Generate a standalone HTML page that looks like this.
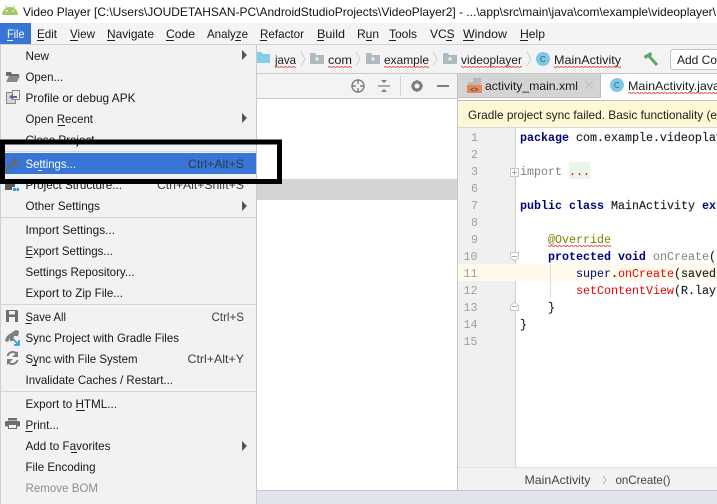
<!DOCTYPE html>
<html><head><meta charset="utf-8"><style>
html,body{margin:0;padding:0;background:#fff;overflow:hidden}
svg{display:block}
text{font-family:"Liberation Sans",sans-serif;font-size:12px;fill:#1c1c1c;white-space:pre}
.m{fill:#16161e}
.s{fill:#3c3c3c}
.c{font-family:"Liberation Mono",monospace;font-size:11.67px;fill:#222;stroke:#222;stroke-width:.15px}
.k{font-family:"Liberation Mono",monospace;font-size:11.67px;fill:#000080;font-weight:bold}
.n{font-family:"Liberation Mono",monospace;font-size:11.67px;fill:#a0a0a0}
.g{font-family:"Liberation Mono",monospace;font-size:11.67px;fill:#808080}
.r{font-family:"Liberation Mono",monospace;font-size:11.67px;fill:#f00000}
</style></head><body>
<svg width="717" height="504" viewBox="0 0 717 504" xmlns="http://www.w3.org/2000/svg">
<defs>
<pattern id="sq" width="4" height="2" patternUnits="userSpaceOnUse"><path d="M0 1.6 L1 .4 L2 .4 L3 1.6 L4 1.6" fill="none" stroke="#e84040" stroke-width=".8"/></pattern>
</defs>
<rect width="717" height="504" fill="#fff"/>

<!-- title bar -->
<path d="M2 15 C2 10 6 7 10 7 C14 7 18 10 18 15z" fill="#a3c76a"/>
<path d="M5.500 5.500 L7 8 M14.500 5.500 L13 8" stroke="#a3c76a" stroke-width="1"/>
<rect x="6" y="10" width="1.500" height="1.500" fill="#fff"/><rect x="12.500" y="10" width="1.500" height="1.500" fill="#fff"/>
<text x="23" y="16" textLength="693" lengthAdjust="spacingAndGlyphs" style="fill:#111">Video Player [C:\Users\JOUDETAHSAN-PC\AndroidStudioProjects\VideoPlayer2] - ...\app\src\main\java\com\example\videoplayer\</text>

<!-- menu bar -->
<rect x="0" y="23" width="717" height="21" fill="#f4f4f4"/>
<rect x="0" y="44" width="717" height="1" fill="#d0d0d0"/>
<rect x="0" y="23" width="31" height="21" fill="#3875d7"/>
<text x="7" y="38" textLength="17.500" lengthAdjust="spacingAndGlyphs" style="fill:#fff">File</text>
<rect x="7" y="40" width="6" height="1" fill="#fff"/>
<g>
<text class="m" x="37" y="38" textLength="20" lengthAdjust="spacingAndGlyphs">Edit</text><rect x="37" y="40" width="7" height="1" fill="#222"/>
<text class="m" x="70" y="38" textLength="25" lengthAdjust="spacingAndGlyphs">View</text><rect x="70" y="40" width="8" height="1" fill="#222"/>
<text class="m" x="107" y="38" textLength="47" lengthAdjust="spacingAndGlyphs">Navigate</text><rect x="107" y="40" width="8" height="1" fill="#222"/>
<text class="m" x="166" y="38" textLength="29" lengthAdjust="spacingAndGlyphs">Code</text><rect x="166" y="40" width="8" height="1" fill="#222"/>
<text class="m" x="207" y="38" textLength="41" lengthAdjust="spacingAndGlyphs">Analyze</text><rect x="235" y="40" width="6" height="1" fill="#222"/>
<text class="m" x="260" y="38" textLength="44" lengthAdjust="spacingAndGlyphs">Refactor</text><rect x="260" y="40" width="7" height="1" fill="#222"/>
<text class="m" x="317" y="38" textLength="28" lengthAdjust="spacingAndGlyphs">Build</text><rect x="317" y="40" width="7" height="1" fill="#222"/>
<text class="m" x="357" y="38">Run</text><rect x="366" y="40" width="6" height="1" fill="#222"/>
<text class="m" x="389" y="38" textLength="28" lengthAdjust="spacingAndGlyphs">Tools</text><rect x="389" y="40" width="7" height="1" fill="#222"/>
<text class="m" x="430" y="38">VCS</text><rect x="446" y="40" width="6" height="1" fill="#222"/>
<text class="m" x="463" y="38" textLength="44" lengthAdjust="spacingAndGlyphs">Window</text><rect x="463" y="40" width="11" height="1" fill="#222"/>
<text class="m" x="520" y="38" textLength="25" lengthAdjust="spacingAndGlyphs">Help</text><rect x="520" y="40" width="8" height="1" fill="#222"/>
</g>

<!-- nav bar -->
<rect x="257" y="45" width="460" height="28" fill="#f3f3f3"/>
<rect x="257" y="73" width="460" height="1" fill="#c9c9c9"/>
<path d="M257 52 h4 l2 2 h7 v9 h-13z" fill="#86cde9"/>
<text x="275" y="64" textLength="21" lengthAdjust="spacingAndGlyphs">java</text>
<rect x="275" y="66" width="21" height="2" fill="url(#sq)"/>
<path d="M301 52 L305 59 L301 66" fill="none" stroke="#d0d0d0"/>
<path d="M310 53 h5 l1 2 h8 v9 h-14z" fill="#aeb9c0"/><circle cx="317" cy="59" r="1.600" fill="#f3f3f3"/>
<text x="328" y="64" textLength="24" lengthAdjust="spacingAndGlyphs">com</text>
<rect x="328" y="66" width="24" height="2" fill="url(#sq)"/>
<path d="M356 52 L360 59 L356 66" fill="none" stroke="#d0d0d0"/>
<path d="M366 53 h5 l1 2 h8 v9 h-14z" fill="#aeb9c0"/><circle cx="373" cy="59" r="1.600" fill="#f3f3f3"/>
<text x="384" y="64" textLength="45" lengthAdjust="spacingAndGlyphs">example</text>
<rect x="384" y="66" width="45" height="2" fill="url(#sq)"/>
<path d="M433 52 L437 59 L433 66" fill="none" stroke="#d0d0d0"/>
<path d="M443 53 h5 l1 2 h8 v9 h-14z" fill="#aeb9c0"/><circle cx="450" cy="59" r="1.600" fill="#f3f3f3"/>
<text x="461" y="64" textLength="61" lengthAdjust="spacingAndGlyphs">videoplayer</text>
<rect x="461" y="66" width="61" height="2" fill="url(#sq)"/>
<path d="M527 52 L531 59 L527 66" fill="none" stroke="#d0d0d0"/>
<circle cx="543" cy="59" r="7" fill="#7fc8e6"/>
<text x="540" y="62" style="font-size:8px;fill:#3d5a68">C</text>
<text x="554" y="64" textLength="67" lengthAdjust="spacingAndGlyphs">MainActivity</text>
<rect x="554" y="66" width="67" height="2" fill="url(#sq)"/>
<path d="M644.500 57.500 L651.500 53.500" stroke="#5aa86b" stroke-width="3.500" fill="none"/>
<path d="M648 55 L657 65" stroke="#5aa86b" stroke-width="3" fill="none"/>
<rect x="670.500" y="49.500" width="60" height="20" rx="3" fill="#fff" stroke="#c4c4c4"/>
<text x="677" y="64" textLength="40" lengthAdjust="spacingAndGlyphs">Add Co</text>

<!-- project toolbar -->
<rect x="257" y="74" width="200" height="24" fill="#f3f3f3"/>
<rect x="257" y="98" width="200" height="1" fill="#c9c9c9"/>
<circle cx="358" cy="86" r="6" fill="none" stroke="#7d7d7d" stroke-width="1.400"/>
<path d="M358 80 v4 M358 88 v4 M352 86 h4 M360 86 h4" stroke="#7d7d7d" stroke-width="1.400"/>
<path d="M378 86 h12" stroke="#7d7d7d" stroke-width="1.200"/>
<path d="M381 80 h6 l-3 3z M381 92 h6 l-3 -3z" fill="#7d7d7d"/>
<rect x="400" y="76" width="1" height="20" fill="#d4d4d4"/>
<circle cx="417" cy="86" r="4" fill="none" stroke="#7d7d7d" stroke-width="3"/>
<path d="M417 80 v2 M417 90 v2 M411 86 h2 M421 86 h2 M413 82 l1 1 M420 89 l1 1 M421 82 l-1 1 M414 89 l-1 1" stroke="#7d7d7d" stroke-width="1.600"/>
<rect x="437" y="85" width="12" height="2" fill="#7d7d7d"/>

<!-- selection in project panel -->
<rect x="257" y="179" width="200" height="21" fill="#d4d4d4"/>

<!-- editor -->
<rect x="457" y="74" width="1" height="416" fill="#c4c4c4"/>
<rect x="458" y="74" width="143" height="24" fill="#d4d4d4"/>
<rect x="600" y="74" width="1" height="24" fill="#bdbdbd"/>
<rect x="458" y="97" width="143" height="1" fill="#bdbdbd"/>
<path d="M468 85 V82 H473 V78 H481 V85z" fill="#b9b9b9"/>
<rect x="467" y="85" width="15" height="8" fill="#e8855a"/>
<text x="470" y="92" style="font-size:7px;fill:#333">&lt;&gt;</text>
<text x="485" y="90" textLength="93" lengthAdjust="spacingAndGlyphs">activity_main.xml</text>
<path d="M585 81 L593 89 M593 81 L585 89" stroke="#bdbdbd" stroke-width="1.100"/>
<circle cx="617" cy="85" r="7" fill="#7fc8e6"/>
<text x="614" y="88" style="font-size:8px;fill:#3d5a68">C</text>
<text x="628" y="90" textLength="92" lengthAdjust="spacingAndGlyphs">MainActivity.java</text>
<rect x="628" y="92" width="89" height="2" fill="url(#sq)"/>
<rect x="458" y="100" width="259" height="1" fill="#bdbdbd"/>
<rect x="458" y="101" width="259" height="26" fill="#fff8d6"/>
<rect x="458" y="127" width="259" height="1" fill="#d8d8d8"/>
<text x="468" y="119" textLength="249" lengthAdjust="spacingAndGlyphs">Gradle project sync failed. Basic functionality (e</text>

<rect x="458" y="128" width="57" height="339" fill="#f0f0f0"/>
<rect x="515" y="128" width="1" height="339" fill="#d0d0d0"/>
<rect x="458" y="264" width="259" height="17" fill="#fffbec"/>

<text class="n" x="471" y="141">1</text>
<text class="n" x="471" y="158">2</text>
<text class="n" x="471" y="175">3</text>
<text class="n" x="471" y="192">6</text>
<text class="n" x="471" y="209">7</text>
<text class="n" x="471" y="226">8</text>
<text class="n" x="471" y="243">9</text>
<text class="n" x="463.500" y="260">10</text>
<text class="n" x="463.500" y="277">11</text>
<text class="n" x="463.500" y="294">12</text>
<text class="n" x="463.500" y="311">13</text>
<text class="n" x="463.500" y="328">14</text>
<text class="n" x="463.500" y="345">15</text>

<rect x="510.500" y="168.500" width="8" height="8" fill="#fff" stroke="#c6c6c6"/>
<path d="M512 172.500 h5 M514.500 170 v5" stroke="#aaa"/>
<path d="M510.500 252.500 h8 v5 l-4 3.500 l-4 -3.500z" fill="#fff" stroke="#c6c6c6"/>
<path d="M512 256.500 h5" stroke="#aaa"/>
<path d="M510.500 310.500 h8 v-5 l-4 -3.500 l-4 3.500z" fill="#fff" stroke="#c6c6c6"/>
<path d="M512 306.500 h5" stroke="#aaa"/>
<rect x="550" y="264" width="1" height="33" fill="#dcdcdc"/>

<text class="k" x="520" y="141">package</text>
<text class="c" x="569" y="141"> com.example.videoplay</text>
<text class="g" x="520" y="175">import</text>
<rect x="569" y="162" width="21" height="17" fill="#e9f5e9"/>
<text class="r" x="569" y="175">...</text>
<text class="k" x="520" y="209">public class</text>
<text class="c" x="611" y="209">MainActivity</text>
<text class="k" x="702" y="209">ex</text>
<text x="548" y="243" class="c" style="fill:#808000;stroke:none">@Override</text>
<rect x="548" y="245" width="63" height="2" fill="url(#sq)"/>
<text class="k" x="548" y="260">protected void</text>
<text class="g" x="653" y="260">onCreate</text>
<text class="c" x="709" y="260">(</text>
<text class="k" x="576" y="277" style="font-weight:normal">super</text>
<text class="c" x="611" y="277">.</text>
<text class="r" x="618" y="277">onCreate</text>
<text class="c" x="674" y="277">(saved</text>
<text class="r" x="576" y="294">setContentView</text>
<text class="c" x="674" y="294">(R.lay</text>
<text class="c" x="548" y="311">}</text>
<text class="c" x="520" y="328">}</text>

<!-- breadcrumb bottom -->
<rect x="458" y="467" width="259" height="23" fill="#f2f2f2"/>
<rect x="458" y="467" width="259" height="1" fill="#e2e2e2"/>
<text x="524.500" y="484" textLength="66" lengthAdjust="spacingAndGlyphs" style="fill:#444">MainActivity</text>
<path d="M603 476 L606 480 L603 484" fill="none" stroke="#b0b0b0"/>
<text x="615.500" y="484" textLength="55" lengthAdjust="spacingAndGlyphs" style="fill:#444">onCreate()</text>
<rect x="257" y="490" width="460" height="1" fill="#c6c6c6"/>
<rect x="257" y="491" width="460" height="13" fill="#e1e4ed"/>

<!-- file menu -->
<rect x="0" y="45" width="257" height="459" fill="#f2f2f2"/>
<rect x="0" y="45" width="1" height="459" fill="#cfcfcf"/>
<rect x="256" y="45" width="1" height="459" fill="#cacaca"/>
<rect x="1" y="151" width="255" height="1" fill="#d4d4d4"/>
<rect x="1" y="217" width="255" height="1" fill="#d4d4d4"/>
<rect x="1" y="304" width="255" height="1" fill="#d4d4d4"/>
<rect x="1" y="391" width="255" height="1" fill="#d4d4d4"/>

<text class="m" x="25.500" y="60" textLength="23.500" lengthAdjust="spacingAndGlyphs">New</text>
<path d="M242 50 L247 55 L242 60z" fill="#555"/>
<path d="M6 72 h5 l1 2 h7 v2 h-13z" fill="#6e6e6e"/><path d="M6 82 L9 76 H20 L17 82z" fill="#8a8a8a"/>
<text class="m" x="25.500" y="81" textLength="37.500" lengthAdjust="spacingAndGlyphs">Open...</text>
<rect x="6.500" y="92.500" width="9" height="11" fill="#d5d5d5" stroke="#8a8a8a"/>
<rect x="12.500" y="90.500" width="7" height="9" fill="#eee" stroke="#8a8a8a"/>
<path d="M9 97 L13 94 V96 H17 V98 H13 V100z" fill="#7a569e"/>
<text class="m" x="25.500" y="102" textLength="110" lengthAdjust="spacingAndGlyphs">Profile or debug APK</text>
<text class="m" x="25.500" y="123" textLength="67.500" lengthAdjust="spacingAndGlyphs">Open Recent</text>
<rect x="58" y="125" width="7" height="1" fill="#222"/>
<path d="M242 113 L247 118 L242 123z" fill="#555"/>
<text class="m" x="25.500" y="144" textLength="69" lengthAdjust="spacingAndGlyphs">Close Project</text>

<rect x="1" y="153" width="255" height="21" fill="#3875d7"/>
<path d="M7.500 169 L14 162.500" stroke="#5f6a78" stroke-width="3.200" stroke-linecap="round" fill="none"/>
<path d="M12 163 C11.500 159.500 14.500 156.500 18.500 157.500 L15.500 160.500 L17 162.500 L19.500 160 C20 164 17 166.500 13.500 165z" fill="#5f6a78"/>
<text x="25.500" y="168" textLength="50.500" lengthAdjust="spacingAndGlyphs" style="fill:#fff">Settings...</text>
<rect x="38" y="170" width="4" height="1" fill="#fff"/>
<text x="188" y="168" textLength="56" lengthAdjust="spacingAndGlyphs" style="fill:#2d3a4f">Ctrl+Alt+S</text>

<rect x="5" y="184" width="7" height="6" fill="#5a5a5a"/>
<rect x="12" y="184" width="3" height="3" fill="#5a5a5a"/>
<rect x="13" y="188" width="3" height="3" fill="#3d9ad6"/><rect x="16.500" y="188" width="2.500" height="3" fill="#3d9ad6"/>
<text class="m" x="25.500" y="189" textLength="96.500" lengthAdjust="spacingAndGlyphs">Project Structure...</text>
<text class="s" x="157" y="189" textLength="87" lengthAdjust="spacingAndGlyphs">Ctrl+Alt+Shift+S</text>
<text class="m" x="25.500" y="210" textLength="74.500" lengthAdjust="spacingAndGlyphs">Other Settings</text>
<path d="M242 201 L247 206 L242 211z" fill="#555"/>

<text class="m" x="25.500" y="234" textLength="89.500" lengthAdjust="spacingAndGlyphs">Import Settings...</text>
<text class="m" x="25.500" y="255" textLength="87.500" lengthAdjust="spacingAndGlyphs">Export Settings...</text>
<rect x="25.500" y="257" width="7" height="1" fill="#222"/>
<text class="m" x="25.500" y="276" textLength="109" lengthAdjust="spacingAndGlyphs">Settings Repository...</text>
<text class="m" x="25.500" y="297" textLength="97.500" lengthAdjust="spacingAndGlyphs">Export to Zip File...</text>

<path d="M6 310 h11 l1 1 v11 h-12z" fill="#6e6e6e"/><rect x="9" y="311" width="6" height="3.500" fill="#f2f2f2"/><rect x="9" y="317" width="6" height="5" fill="#f2f2f2"/>
<text class="m" x="25.500" y="321" textLength="40.500" lengthAdjust="spacingAndGlyphs">Save All</text>
<rect x="25.500" y="323" width="6" height="1" fill="#222"/>
<text class="s" x="211.500" y="321" textLength="32.500" lengthAdjust="spacingAndGlyphs">Ctrl+S</text>

<path d="M5 341 C6 335 10 334 13 332 C15 329.500 18 329.500 19 332 L18 336 L14 336 L13 341 L10 341 L10 338 L8 342z" fill="#7f7f7f"/>
<path d="M13 339 L19 345 M19 340 V345 H14" fill="none" stroke="#389fd6" stroke-width="1.800"/>
<text class="m" x="25.500" y="342" textLength="153.500" lengthAdjust="spacingAndGlyphs">Sync Project with Gradle Files</text>

<path d="M17 354 A5.500 5.500 0 0 0 7.500 356 M8 362 A5.500 5.500 0 0 0 17.500 360" fill="none" stroke="#7f7f7f" stroke-width="2"/>
<path d="M18 351 V357 H12z M7 365 V359 H13z" fill="#7f7f7f"/>
<text class="m" x="25.500" y="363" textLength="112" lengthAdjust="spacingAndGlyphs">Sync with File System</text>
<rect x="32" y="365" width="5" height="1" fill="#222"/>
<text class="s" x="187.500" y="363" textLength="56.500" lengthAdjust="spacingAndGlyphs">Ctrl+Alt+Y</text>
<text class="m" x="25.500" y="384" textLength="147.500" lengthAdjust="spacingAndGlyphs">Invalidate Caches / Restart...</text>

<text class="m" x="25.500" y="408" textLength="91.500" lengthAdjust="spacingAndGlyphs">Export to HTML...</text>
<rect x="76" y="410" width="9" height="1" fill="#222"/>
<rect x="8" y="418" width="9" height="2.500" fill="#6e6e6e"/>
<rect x="5" y="421" width="15" height="5.500" rx="1" fill="#6e6e6e"/>
<rect x="8.500" y="424.500" width="8" height="4" fill="#f2f2f2" stroke="#6e6e6e"/>
<text class="m" x="25.500" y="429" textLength="33.500" lengthAdjust="spacingAndGlyphs">Print...</text>
<rect x="25.500" y="431" width="7" height="1" fill="#222"/>
<text class="m" x="25.500" y="450" textLength="85" lengthAdjust="spacingAndGlyphs">Add to Favorites</text>
<rect x="71" y="452" width="6" height="1" fill="#222"/>
<path d="M242 441 L247 446 L242 451z" fill="#555"/>
<text class="m" x="25.500" y="471" textLength="70" lengthAdjust="spacingAndGlyphs">File Encoding</text>
<text x="25.500" y="492" textLength="72.500" lengthAdjust="spacingAndGlyphs" style="fill:#8e8e8e">Remove BOM</text>

<!-- black annotation box -->
<rect x="2.500" y="142" width="277" height="39.500" fill="none" stroke="#000" stroke-width="5"/>
</svg>
</body></html>
